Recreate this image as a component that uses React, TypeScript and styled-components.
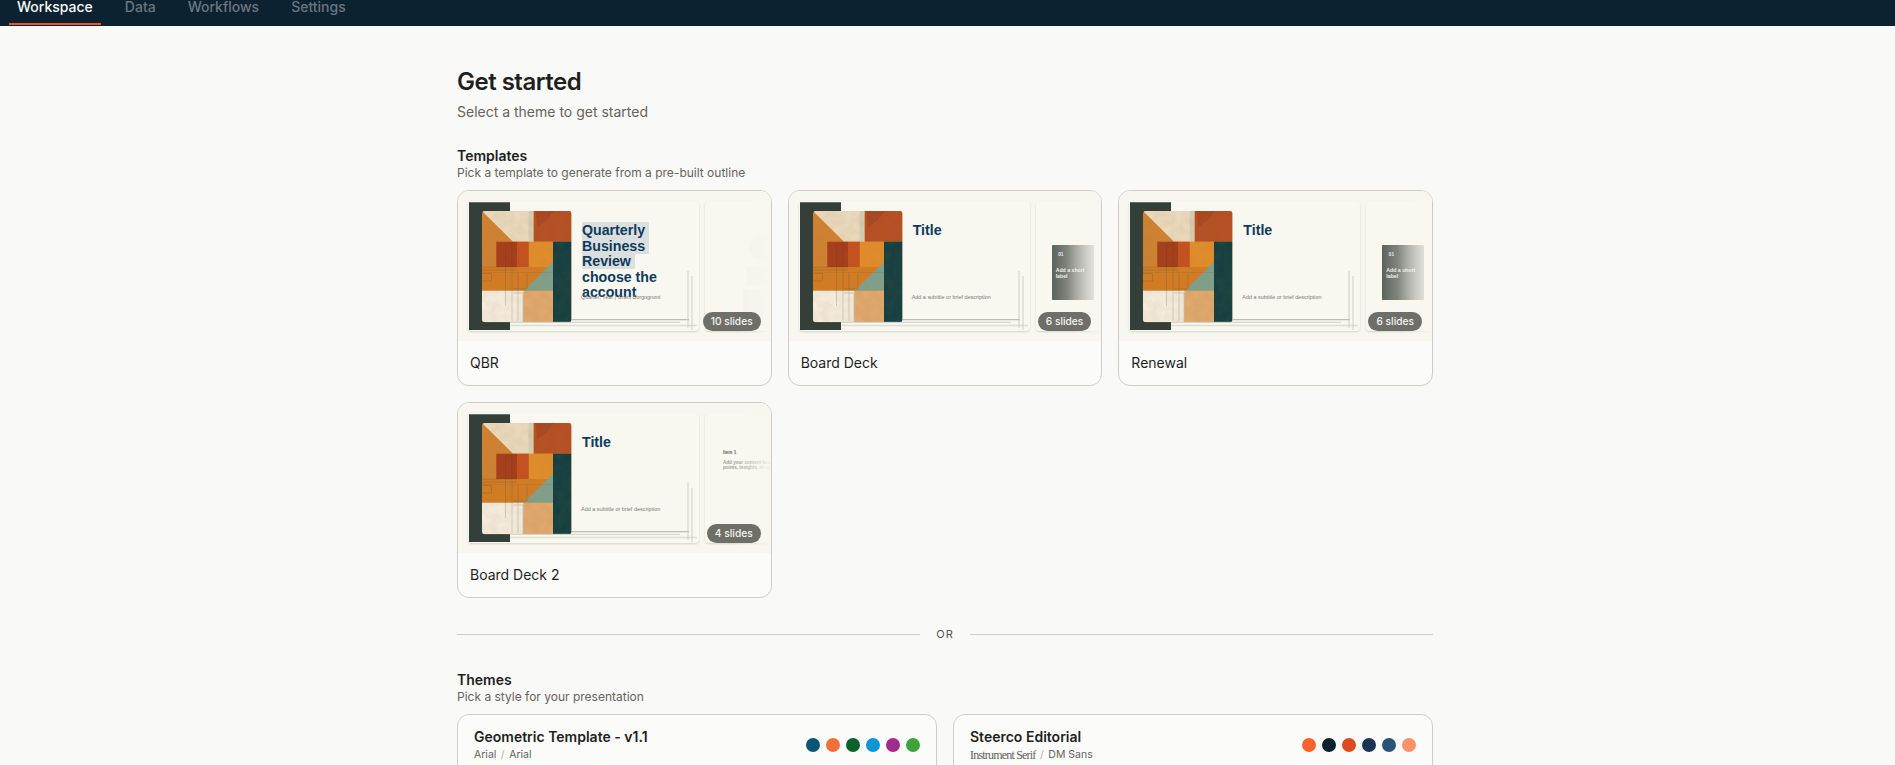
import React from "react";
import styled, { createGlobalStyle } from "styled-components";

const Global = createGlobalStyle`
  html, body { margin: 0; padding: 0; height: 765px; overflow: hidden; background: #f9f9f7; }
  body { font-family: Inter, "Noto Sans", sans-serif; color: #1f1f1d; }
  * { box-sizing: border-box; }
`;

const TopBar = styled.nav`
  height: 26px;
  background: #0c2230;
  display: flex;
  align-items: flex-start;
  gap: 16px;
  padding-left: 9px;
`;
const Tab = styled.div<{ $active?: boolean }>`
  height: 25px;
  padding: 0 8px;
  font-size: 14px;
  line-height: 14px;
  font-weight: 500;
  color: ${(p) => (p.$active ? "#fbfbf8" : "#6b7780")};
  border-bottom: 2px solid ${(p) => (p.$active ? "#f4532a" : "transparent")};
`;

const Main = styled.main`
  width: 976px;
  margin-left: 457px;
  padding-top: 40px;
`;
const Title = styled.h1`
  margin: 0;
  font-size: 24px;
  line-height: 32px;
  font-weight: 600;
  letter-spacing: -0.5px;
  color: #1f1f1d;
`;
const Lead = styled.p`
  margin: 4px 0 0;
  font-size: 14px;
  line-height: 20px;
  color: #66645c;
`;
const SectionHead = styled.h2<{ $top: number }>`
  margin: ${(p) => p.$top}px 0 0;
  font-size: 14px;
  line-height: 18px;
  font-weight: 600;
  color: #1f1f1d;
`;
const SectionSub = styled.p`
  margin: 0 0 9px;
  font-size: 12px;
  line-height: 16px;
  color: #66645c;
`;
const TemplateGrid = styled.div`
  display: grid;
  grid-template-columns: repeat(3, 1fr);
  gap: 16px;
`;
const Card = styled.article`
  height: 196px;
  border: 1px solid #cfcdc3;
  border-radius: 12px;
  background: #fbfbfa;
  overflow: hidden;
  display: flex;
  flex-direction: column;
`;
const Preview = styled.div`
  position: relative;
  height: 150px;
  flex: none;
  padding: 10px;
  display: flex;
  gap: 6px;
  background: #f7f6ef;
  overflow: hidden;
`;
const Slide = styled.div`
  position: relative;
  flex: none;
  width: 231px;
  height: 130px;
  background: #f8f7f0;
  border-radius: 4px;
  box-shadow: 0 1px 2px rgba(60, 60, 50, 0.18);
  overflow: hidden;
`;
const Art = styled.svg`
  position: absolute;
  inset: 0;
`;
const SlideTitle = styled.div`
  position: absolute;
  left: 114px;
  top: 22px;
  font-family: "Liberation Sans", Arial, sans-serif;
  font-weight: 700;
  font-size: 14.2px;
  line-height: 15.5px;
  color: #0e3a5c;
  white-space: nowrap;
`;
const Mark = styled.span`
  background: #dbe0df;
  padding-right: 4px;
`;
const SlideSub = styled.div`
  position: absolute;
  left: 113px;
  top: 93px;
  font-family: "Liberation Sans", Arial, sans-serif;
  font-size: 5.45px;
  line-height: 7px;
  color: #7a7b72;
  white-space: nowrap;
`;
const MiniCard = styled.div`
  position: absolute;
  left: 16px;
  top: 44px;
  width: 42px;
  height: 55px;
  border-radius: 1px;
  background: linear-gradient(90deg, #5c635c, #848780 40%, #a9aba5);
  color: #f0f0ea;
  font-family: "Liberation Sans", Arial, sans-serif;
  font-weight: 700;
  font-size: 5.2px;
  line-height: 6px;
  padding: 7px 4px;
`;
const MiniNumber = styled.div`
  padding-left: 2.5px;
  margin-bottom: 9px;
  font-size: 4.6px;
`;
const ItemHead = styled.div`
  position: absolute;
  left: 18px;
  top: 37px;
  font-family: "Liberation Sans", Arial, sans-serif;
  font-weight: 700;
  font-size: 4.6px;
  line-height: 6px;
  color: #6a6b63;
`;
const ItemBody = styled.div`
  position: absolute;
  left: 18px;
  top: 47px;
  font-family: "Liberation Sans", Arial, sans-serif;
  font-weight: 700;
  font-size: 4.6px;
  line-height: 5px;
  color: #a0a198;
  white-space: nowrap;
`;
const Fade = styled.div`
  position: absolute;
  top: 0;
  right: 0;
  bottom: 0;
  width: 34px;
  background: linear-gradient(90deg, rgba(247, 246, 239, 0), rgba(247, 246, 239, 0.92));
`;
const Badge = styled.span`
  position: absolute;
  right: 10px;
  bottom: 10px;
  height: 19px;
  padding: 0 8px;
  border-radius: 10px;
  background: #6f6f69;
  color: #f3f3ee;
  font-size: 10.2px;
  line-height: 19px;
  font-weight: 500;
`;
const CardLabel = styled.div`
  flex: 1;
  display: flex;
  align-items: center;
  padding: 0 12px 1px;
  font-size: 14px;
  color: #1f1f1d;
`;

const Divider = styled.div`
  display: flex;
  align-items: center;
  gap: 16px;
  margin-top: 28px;
  font-size: 11px;
  line-height: 16px;
  letter-spacing: 1px;
  color: #55534c;
  &::before,
  &::after {
    content: "";
    flex: 1;
    height: 1px;
    background: #cfcdc3;
  }
`;
const ThemeGrid = styled.div`
  display: grid;
  grid-template-columns: repeat(2, 1fr);
  gap: 16px;
`;
const ThemeCard = styled.article`
  height: 96px;
  border: 1px solid #cfcdc3;
  border-radius: 12px;
  background: #fbfbfa;
  padding: 12px 16px;
  display: flex;
  justify-content: space-between;
  align-items: flex-start;
`;
const ThemeName = styled.div`
  font-size: 14px;
  line-height: 20px;
  font-weight: 600;
  color: #1f1f1d;
`;
const FontLine = styled.div`
  display: flex;
  gap: 4.5px;
  font-size: 10.5px;
  line-height: 16px;
  color: #66645c;
`;
const SerifFont = styled.span`
  font-family: "Liberation Serif", serif;
  font-size: 12px;
  letter-spacing: -0.8px;
`;
const Slash = styled.span`
  color: #b5b3a9;
`;
const Dots = styled.div`
  display: flex;
  gap: 6px;
  margin-top: 11px;
`;
const Dot = styled.span<{ $color: string }>`
  width: 14px;
  height: 14px;
  border-radius: 50%;
  background: ${(p) => p.$color};
`;

function Geometric() {
  return (
    <Art width={231} height={130} viewBox="0 0 231 130">
      <defs>
        <clipPath id="artClip">
          <rect x={0} y={0} width={89.5} height={111.3} rx={3} />
        </clipPath>
        <filter id="grain" x="0" y="0" width="100%" height="100%">
          <feTurbulence type="fractalNoise" baseFrequency="0.12" numOctaves={2} seed={4} />
          <feColorMatrix values="0 0 0 0 0.35  0 0 0 0 0.18  0 0 0 0 0.05  0 0 0 0.16 -0.04" />
        </filter>
      </defs>
      <rect x={1} y={1} width={41} height={128} fill="#353f39" />
      <rect x={1} y={1} width={41} height={0.7} fill="#7f877f" />
      <g transform="translate(14,10)" clipPath="url(#artClip)">
        <rect width={89.5} height={111.3} fill="#cf8131" />
        <polygon points="0,0 51.7,0 51.7,30.7 31,30.7" fill="#ead9bd" />
        <rect x={46.7} y={0} width={5} height={30.7} fill="#d6cdb3" />
        <rect x={51.7} y={0} width={37.8} height={30.7} fill="#b54f24" />
        <polygon points="54,0 72,0 64,10 55,16" fill="#a84722" />
        <rect x={46.7} y={30.7} width={24.3} height={26} fill="#e08c2a" />
        <rect x={14.3} y={30.7} width={20.7} height={26} fill="#a63d1a" />
        <rect x={35} y={30.7} width={11.7} height={26} fill="#c4511f" />
        <rect x={0} y={56} width={71} height={24} fill="#d27c24" />
        <polygon points="71,50.7 71,79.7 41.7,79.7" fill="#7fa08c" />
        <rect x={71} y={30.7} width={18.5} height={80.6} fill="#143f41" />
        <rect x={0} y={79.7} width={41.7} height={31.6} fill="#f4ebdc" />
        <rect x={41.7} y={79.7} width={29.3} height={31.6} fill="#dfa86c" />
        <rect width={89.5} height={111.3} filter="url(#grain)" />
        <g fill="none" stroke="#3c4a40" strokeWidth={0.5} opacity={0.4}>
          <path d="M0 56.2H35M0 59H35" />
          <path d="M0 62.5H9.5V70H0" />
          <path d="M0 61.5H89.5" opacity={0.5} />
          <path d="M23.5 32V95" />
          <path d="M30 32V110M36 62V110" />
          <path d="M31 78H45V62" />
          <path d="M31 82H41V111" />
          <path d="M82 40V111" />
        </g>
      </g>
      <g fill="none">
        <path d="M103 118.7H221" stroke="#aeb1a9" strokeWidth={1} />
        <path d="M42 121.3H212" stroke="#c6c8be" strokeWidth={0.8} />
        <path d="M42 124.5H229" stroke="#dddecf" strokeWidth={1.6} />
        <path d="M220 70V127M224 75V129" stroke="#c3c5bc" strokeWidth={0.8} />
      </g>
    </Art>
  );
}

function FaintArt() {
  return (
    <Art width={231} height={130} viewBox="0 0 231 130">
      <g fill="#f4f3eb">
        <circle cx={56} cy={47} r={12} />
        <rect x={42} y={66} width={30} height={18} />
        <rect x={38} y={88} width={36} height={26} />
      </g>
    </Art>
  );
}

const templates = [
  { name: "QBR", count: "10 slides", kind: "qbr" },
  { name: "Board Deck", count: "6 slides", kind: "mini" },
  { name: "Renewal", count: "6 slides", kind: "mini" },
  { name: "Board Deck 2", count: "4 slides", kind: "item" },
];

function SecondSlide({ kind }: { kind: string }) {
  return (
    <Slide>
      {kind === "qbr" && <FaintArt />}
      {kind === "mini" && (
        <MiniCard>
          <MiniNumber>01</MiniNumber>
          Add a short
          <br />
          label
        </MiniCard>
      )}
      {kind === "item" && (
        <>
          <ItemHead>Item 1</ItemHead>
          <ItemBody>
            Add your content here. Use
            <br />
            points, insights, or support
          </ItemBody>
        </>
      )}
    </Slide>
  );
}

export default function App() {
  return (
    <>
      <Global />
      <TopBar>
        <Tab $active>Workspace</Tab>
        <Tab>Data</Tab>
        <Tab>Workflows</Tab>
        <Tab>Settings</Tab>
      </TopBar>
      <Main>
        <Title>Get started</Title>
        <Lead>Select a theme to get started</Lead>
        <SectionHead $top={25}>Templates</SectionHead>
        <SectionSub>Pick a template to generate from a pre-built outline</SectionSub>
        <TemplateGrid>
          {templates.map((t) => (
            <Card key={t.name}>
              <Preview>
                <Slide>
                  <Geometric />
                  {t.kind === "qbr" ? (
                    <SlideTitle>
                      <Mark>Quarterly</Mark>
                      <br />
                      <Mark>Business</Mark>
                      <br />
                      <Mark>Review</Mark>
                      <br />
                      choose the
                      <br />
                      account
                    </SlideTitle>
                  ) : (
                    <SlideTitle>Title</SlideTitle>
                  )}
                  <SlideSub>
                    {t.kind === "qbr"
                      ? "Quarter, Year | Grant Borgognoni"
                      : "Add a subtitle or brief description"}
                  </SlideSub>
                </Slide>
                <SecondSlide kind={t.kind} />
                <Fade />
                <Badge>{t.count}</Badge>
              </Preview>
              <CardLabel>{t.name}</CardLabel>
            </Card>
          ))}
        </TemplateGrid>
        <Divider>OR</Divider>
        <SectionHead $top={29}>Themes</SectionHead>
        <SectionSub>Pick a style for your presentation</SectionSub>
        <ThemeGrid>
          <ThemeCard>
            <div>
              <ThemeName>Geometric Template - v1.1</ThemeName>
              <FontLine>
                <span>Arial</span>
                <Slash>/</Slash>
                <span>Arial</span>
              </FontLine>
            </div>
            <Dots>
              {["#0b5577", "#f1703a", "#0b6329", "#0a97d3", "#a12c8c", "#3ea33a"].map((c) => (
                <Dot key={c} $color={c} />
              ))}
            </Dots>
          </ThemeCard>
          <ThemeCard>
            <div>
              <ThemeName>Steerco Editorial</ThemeName>
              <FontLine>
                <SerifFont>Instrument Serif</SerifFont>
                <Slash>/</Slash>
                <span>DM Sans</span>
              </FontLine>
            </div>
            <Dots>
              {["#f9622e", "#0c2230", "#dd4a20", "#1a3557", "#2c5278", "#fb926a"].map((c) => (
                <Dot key={c} $color={c} />
              ))}
            </Dots>
          </ThemeCard>
        </ThemeGrid>
      </Main>
    </>
  );
}
